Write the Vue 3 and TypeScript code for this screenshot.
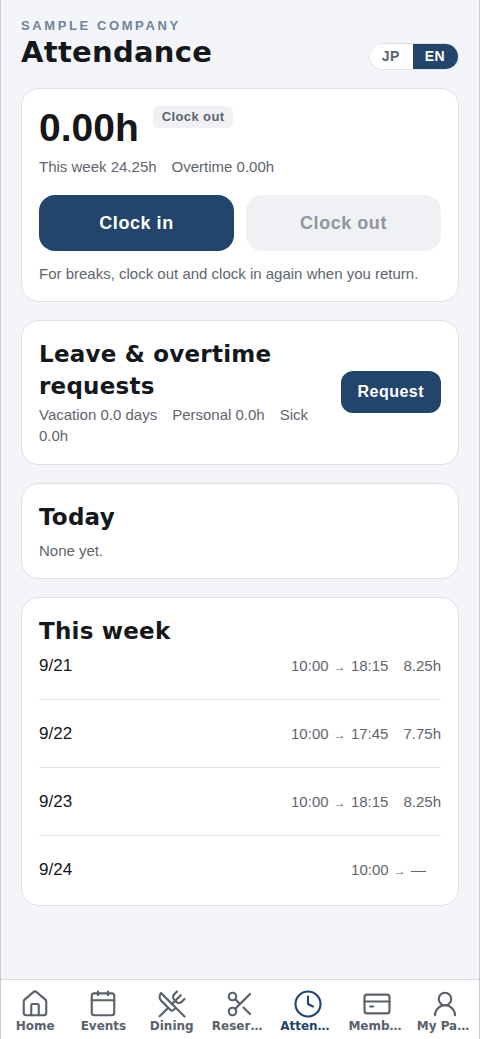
<script setup lang="ts">
import { ref } from 'vue'

interface DayRecord {
  date: string
  start: string
  end: string
  hours: string
}

interface NavItem {
  name: string
  label: string
  icon: string
}

const lang = ref<'jp' | 'en'>('en')
const current = ref('Attendance')

const week: DayRecord[] = [
  { date: '9/21', start: '10:00', end: '18:15', hours: '8.25h' },
  { date: '9/22', start: '10:00', end: '17:45', hours: '7.75h' },
  { date: '9/23', start: '10:00', end: '18:15', hours: '8.25h' },
  { date: '9/24', start: '10:00', end: '—', hours: '' },
]

const nav: NavItem[] = [
  { name: 'Home', label: 'Home', icon: 'home' },
  { name: 'Events', label: 'Events', icon: 'calendar' },
  { name: 'Dining', label: 'Dining', icon: 'utensils' },
  { name: 'Reservations', label: 'Reser…', icon: 'scissors' },
  { name: 'Attendance', label: 'Atten…', icon: 'clock' },
  { name: 'Membership', label: 'Memb…', icon: 'card' },
  { name: 'My Page', label: 'My Pa…', icon: 'user' },
]
</script>

<template>
  <div class="app">
    <main class="content">
      <header class="header">
        <div>
          <p class="eyebrow">SAMPLE COMPANY</p>
          <h1>Attendance</h1>
        </div>
        <div class="lang" role="group" aria-label="Language">
          <button type="button" :class="{ on: lang === 'jp' }" @click="lang = 'jp'">JP</button>
          <button type="button" :class="{ on: lang === 'en' }" @click="lang = 'en'">EN</button>
        </div>
      </header>

      <section class="card">
        <div class="total">
          <strong>0.00h</strong>
          <span class="status">Clock out</span>
        </div>
        <p class="muted summary">This week 24.25h{{ '\u3000' }}Overtime 0.00h</p>
        <div class="actions">
          <button type="button" class="big primary">Clock in</button>
          <button type="button" class="big" disabled>Clock out</button>
        </div>
        <p class="muted">For breaks, clock out and clock in again when you return.</p>
      </section>

      <section class="card requests">
        <div>
          <h2>Leave &amp; overtime requests</h2>
          <p class="muted">Vacation 0.0 days{{ '\u3000' }}Personal 0.0h{{ '\u3000' }}Sick 0.0h</p>
        </div>
        <button type="button" class="request primary">Request</button>
      </section>

      <section class="card today">
        <h2>Today</h2>
        <p class="muted">None yet.</p>
      </section>

      <section class="card">
        <h2>This week</h2>
        <ul class="days">
          <li v-for="d in week" :key="d.date">
            <span>{{ d.date }}</span>
            <span class="muted times">{{ d.start }} <span class="arrow">→</span> {{ d.end }}{{ '\u3000' }}{{ d.hours }}</span>
          </li>
        </ul>
      </section>
    </main>

    <nav class="tabs" aria-label="Main">
      <a
        v-for="item in nav"
        :key="item.name"
        href="#"
        :aria-label="item.name"
        :class="{ active: current === item.name }"
        @click.prevent="current = item.name"
      >
        <svg viewBox="0 0 24 24" aria-hidden="true">
          <template v-if="item.icon === 'home'">
            <path d="M15 21v-8a1 1 0 0 0-1-1h-4a1 1 0 0 0-1 1v8" />
            <path d="M3 10a2 2 0 0 1 .7-1.5l7-6a2 2 0 0 1 2.6 0l7 6A2 2 0 0 1 21 10v9a2 2 0 0 1-2 2H5a2 2 0 0 1-2-2z" />
          </template>
          <template v-else-if="item.icon === 'calendar'">
            <rect x="3" y="3.5" width="18" height="17.5" rx="2" />
            <path d="M8 2v3M16 2v3M3 9h18" />
          </template>
          <template v-else-if="item.icon === 'utensils'">
            <path d="m16 2-2.3 2.3a3 3 0 0 0 0 4.2l1.8 1.8a3 3 0 0 0 4.2 0L22 8" />
            <path d="M15 15 3.3 3.3a4.2 4.2 0 0 0 0 6l7.3 7.3c.7.7 2 .7 2.8 0L15 15Zm0 0 7 7" />
            <path d="m2.1 21.8 6.4-6.3M19 5l-7 7" />
          </template>
          <template v-else-if="item.icon === 'scissors'">
            <circle cx="6" cy="6" r="3" />
            <circle cx="6" cy="18" r="3" />
            <path d="M8.1 8.1 12 12M20 4 8.1 15.9M14.8 14.8 20 20" />
          </template>
          <template v-else-if="item.icon === 'clock'">
            <circle cx="12" cy="12" r="10" />
            <path d="M12 6v6l4 2" />
          </template>
          <template v-else-if="item.icon === 'card'">
            <rect x="2" y="4.5" width="20" height="15" rx="2" />
            <path d="M2 10h20M6.5 14H9" />
          </template>
          <template v-else>
            <circle cx="12" cy="8" r="5" />
            <path d="M20 21a8 8 0 0 0-16 0" />
          </template>
        </svg>
        <span :class="{ short: item.label !== item.name }">{{ item.label }}</span>
      </a>
    </nav>
  </div>
</template>

<style>
body {
  margin: 0;
  background: #f3f5f8;
}
</style>

<style scoped>
.app {
  box-sizing: border-box;
  min-height: 100vh;
  display: flex;
  flex-direction: column;
  border: solid #c9ccd1;
  border-width: 0 1px;
  background: #f3f5f8;
  color: #14171b;
  font: 17px/24px "Liberation Sans", Arial, "Noto Sans CJK JP", sans-serif;
}

h1,
h2,
p,
ul {
  margin: 0;
  padding: 0;
}

button {
  border: 0;
  padding: 0;
  font: inherit;
  font-weight: 700;
  letter-spacing: 0.03em;
  cursor: pointer;
}

.content {
  flex: 1;
  display: flex;
  flex-direction: column;
  gap: 18px;
  padding: 17px 20px 20px;
}

.header {
  display: flex;
  justify-content: space-between;
  align-items: flex-end;
}

.eyebrow {
  color: #71839b;
  font-size: 13px;
  font-weight: 700;
  line-height: 17px;
  letter-spacing: 0.2em;
}

h1,
h2 {
  font-family: "DejaVu Sans", Verdana, sans-serif;
  font-weight: 700;
  letter-spacing: 0.01em;
}

h1 {
  font-size: 29px;
  line-height: 36px;
}

h2 {
  font-size: 23px;
  line-height: 32px;
}

.lang {
  display: flex;
  overflow: hidden;
  border: 1px solid #dde1e8;
  border-radius: 14px;
  background: #fff;
}

.lang button {
  padding: 0 13px 0 12px;
  background: #fff;
  color: #5d636d;
  font-size: 14px;
  line-height: 25px;
}

.lang .on {
  background: #23446b;
  color: #fff;
}

.card {
  padding: 17px;
  border: 1px solid #dde1e8;
  border-radius: 18px;
  background: #fff;
}

.muted {
  color: #5f656e;
  font-size: 15px;
  line-height: 21px;
}

.total {
  display: flex;
  align-items: flex-start;
  gap: 14px;
}

.total strong {
  font-size: 39px;
  line-height: 44px;
}

.status {
  padding: 0 9px;
  border-radius: 6px;
  background: #f0f1f5;
  color: #5d636d;
  font-size: 13px;
  font-weight: 700;
  line-height: 22px;
  letter-spacing: 0.03em;
}

.summary {
  margin-top: 6px;
}

.actions {
  display: grid;
  grid-template-columns: 1fr 1fr;
  gap: 12px;
  margin: 18px 0 12px;
}

.primary {
  background: #23446b;
  color: #fff;
}

.big {
  border-radius: 16px;
  font-size: 18px;
  line-height: 56px;
}

.big:disabled {
  background: #f0f1f5;
  color: #8f95a1;
  cursor: default;
}

.requests {
  display: flex;
  align-items: center;
  justify-content: space-between;
  gap: 14px;
  padding-bottom: 18px;
}

.requests .muted {
  margin-top: 2px;
}

.request {
  flex: none;
  padding: 0 17px;
  border-radius: 12px;
  font-size: 16px;
  line-height: 42px;
}

.today .muted {
  margin-top: 7px;
}

.days {
  list-style: none;
}

.days li {
  display: flex;
  align-items: baseline;
  justify-content: space-between;
  padding: 22px 0 21px;
  border-bottom: 1px solid #dde1e8;
}

.days li:first-child {
  padding-top: 7px;
}

.days li:last-child {
  padding-bottom: 6px;
  border-bottom: 0;
}

.times {
  white-space: pre;
}

.arrow {
  padding: 0 1px;
  font-size: 12px;
}

.tabs {
  position: sticky;
  bottom: 0;
  display: grid;
  grid-template-columns: repeat(7, minmax(0, 1fr));
  border-top: 1px solid #d5d9df;
  background: #fff;
}

.tabs a {
  display: flex;
  flex-direction: column;
  align-items: center;
  padding: 9px 6px 5px;
  color: #5a616b;
  font: 700 12px/15px "DejaVu Sans", Verdana, sans-serif;
  text-decoration: none;
}

.tabs .active {
  color: #23446b;
}

.tabs svg {
  width: 30px;
  height: 30px;
  fill: none;
  stroke: currentColor;
  stroke-width: 1.7;
  stroke-linecap: round;
  stroke-linejoin: round;
}

.tabs span {
  white-space: nowrap;
}

.tabs .short {
  width: 100%;
}
</style>
